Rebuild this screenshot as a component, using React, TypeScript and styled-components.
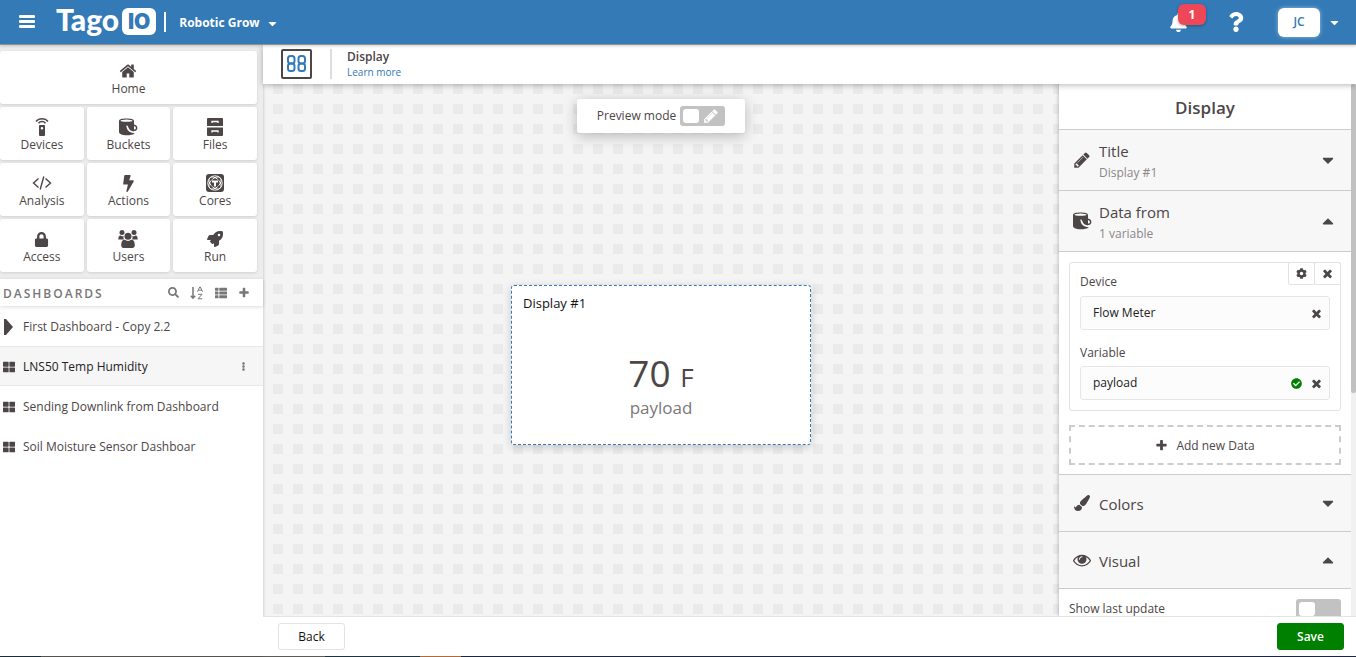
import React from "react";
import styled, { createGlobalStyle, css } from "styled-components";
import {
  FaBell,
  FaBolt,
  FaCaretDown,
  FaCaretUp,
  FaCheckCircle,
  FaCog,
  FaEllipsisV,
  FaLock,
  FaPaintBrush,
  FaQuestion,
  FaRocket,
  FaSearch,
  FaThLarge,
  FaThList,
} from "react-icons/fa";

const GlobalStyle = createGlobalStyle`
  *, *::before, *::after { box-sizing: border-box; }
  body {
    margin: 0;
    background: #fff;
    color: #4c4647;
    font-family: "Open Sans", "Noto Sans", sans-serif;
    font-size: 12px;
    line-height: 16px;
  }
  button, input { font: inherit; color: inherit; }
  button { margin: 0; padding: 0; border: 0; background: none; cursor: pointer; }
  a { color: inherit; text-decoration: none; }
  svg { display: block; flex: none; }
`;

/* ---------- icons ---------- */

interface GlyphProps {
  size: number;
}

const glyph = (d: string) =>
  function Glyph({ size }: GlyphProps) {
    return (
      <svg width={size} height={size} viewBox="0 0 1792 1792" fill="currentColor">
        <path d={d} />
      </svg>
    );
  };

const PencilIcon = glyph(
  "M491 1536l91-91-235-235-91 91v107h128v128h107zm523-928q0-22-22-22-10 0-17 7l-542 542q-7 7-7 17 0 22 22 22 10 0 17-7l542-542q7-7 7-17zm-54-192l416 416-832 832h-416v-416zm683 96q0 53-37 90l-166 166-416-416 166-165q36-38 90-38 53 0 91 38l235 234q37 39 37 91z"
);

const EyeIcon = glyph(
  "M1664 960q-152-236-381-353 61 104 61 225 0 185-131.500 316.500t-316.500 131.500-316.500-131.500-131.500-316.500q0-121 61-225-229 117-381 353 133 205 333.500 326.500t434.500 121.500 434.500-121.500 333.500-326.500zm-720-384q0-20-14-34t-34-14q-125 0-214.500 89.500t-89.500 214.500q0 20 14 34t34 14 34-14 14-34q0-86 61-147t147-61q20 0 34-14t14-34zm848 384q0 34-20 69-140 230-376.500 368.500t-499.500 138.500-499.500-139-376.500-368q-20-35-20-69t20-69q140-229 376.500-368t499.500-139 499.500 139 376.500 368q20 35 20 69z"
);

const CloseIcon = glyph(
  "M1490 1322q0 40-28 68l-136 136q-28 28-68 28t-68-28l-294-294-294 294q-28 28-68 28t-68-28l-136-136q-28-28-28-68t28-68l294-294-294-294q-28-28-28-68t28-68l136-136q28-28 68-28t68 28l294 294 294-294q28-28 68-28t68 28l136 136q28 28 28 68t-28 68l-294 294 294 294q28 28 28 68z"
);

const PlusIcon = glyph(
  "M1600 736v192q0 40-28 68t-68 28h-416v416q0 40-28 68t-68 28h-192q-40 0-68-28t-28-68v-416h-416q-40 0-68-28t-28-68v-192q0-40 28-68t68-28h416v-416q0-40 28-68t68-28h192q40 0 68 28t28 68v416h416q40 0 68 28t28 68z"
);

const HomeIcon = glyph(
  "M1472 992v480q0 26-19 45t-45 19h-384v-384h-256v384h-384q-26 0-45-19t-19-45v-480q0-1 .5-3t.5-3l575-474 575 474q1 2 1 6zm223-69l-62 74q-8 9-21 11h-3q-13 0-21-7l-692-577-692 577q-12 8-24 7-13-2-21-11l-62-74q-8-10-7-23.500t11-21.500l719-599q32-26 76-26t76 26l244 204v-195q0-14 9-23t23-9h192q14 0 23 9t9 23v408l219 182q10 8 11 21.500t-7 23.500z"
);

const MenuIcon = () => (
  <svg width="17" height="14" viewBox="0 0 17 14" fill="currentColor">
    <rect width="16" height="3" rx="1" />
    <rect y="5" width="16" height="3" rx="1" />
    <rect y="10" width="16" height="3" rx="1" />
  </svg>
);

const DeviceIcon = () => (
  <svg width="20" height="20" viewBox="0 0 20 20" fill="none" stroke="currentColor">
    <path d="M4 4.500C7 .9 13 .9 16 4.500" strokeWidth="1.400" />
    <path d="M6.500 6.200C8.300 4 11.700 4 13.500 6.200" strokeWidth="1.400" />
    <path
      fill="currentColor"
      stroke="none"
      fillRule="evenodd"
      d="M8 8h4a1 1 0 0 1 1 1v9a1 1 0 0 1-1 1H8a1 1 0 0 1-1-1V9a1 1 0 0 1 1-1zm2 2a1.300 1.300 0 1 0 0 2.600A1.300 1.300 0 0 0 10 10z"
    />
  </svg>
);

const BucketIcon = () => (
  <svg width="20" height="20" viewBox="0 0 20 20">
    <path
      fill="currentColor"
      d="M1 4C1 2.200 4 1.500 8.500 1.500S16 2.200 16 4v3.500c2.300.2 3.400 1.700 3.400 3.400 0 2-1.500 3.200-3.400 3.200v1.400l.4 1.300c-2.500 1.500-7.400 1.900-11.200 1.100C2.500 17.300 1 16.500 1 15z"
    />
    <ellipse cx="8.500" cy="3.700" rx="6" ry="1.100" fill="#fff" />
    <path d="M16 9.200c1.200 0 1.900.7 1.900 1.700s-.7 1.700-1.900 1.700z" fill="#fff" />
    <path d="M8.500 9c1 .2 1 1.200 1.200 2 .5 2 2.800 3.800 6.300 4.300" fill="none" stroke="#fff" strokeWidth="1.700" />
  </svg>
);

const FilesIcon = () => (
  <svg width="20" height="20" viewBox="0 0 20 20">
    <path fill="currentColor" d="M3 1h14a1 1 0 0 1 1 1v7H2V2a1 1 0 0 1 1-1zM2 10.500h16V18a1 1 0 0 1-1 1H3a1 1 0 0 1-1-1z" />
    <path d="M7 6V4.500h6V6M7 15.500V14h6v1.500" fill="none" stroke="#fff" strokeWidth="1.300" />
  </svg>
);

const CodeIcon = () => (
  <svg width="20" height="20" viewBox="0 0 20 20" fill="none" stroke="currentColor" strokeWidth="1.400">
    <path d="M6.500 5.500L1.500 10l5 4.500M13.500 5.500l5 4.500-5 4.500M11.800 3.500L8.200 16.500" />
  </svg>
);

const CoresIcon = () => (
  <svg width="20" height="20" viewBox="0 0 20 20">
    <rect x="1" y="1" width="18" height="18" rx="3" fill="currentColor" />
    <g fill="none" stroke="#fff" strokeWidth="0.900">
      <circle cx="10" cy="10" r="7.200" />
      <ellipse cx="10" cy="10" rx="7.400" ry="4.500" transform="rotate(45 10 10)" />
      <ellipse cx="10" cy="10" rx="7.400" ry="4.500" transform="rotate(-45 10 10)" />
    </g>
    <circle cx="10" cy="10" r="4" fill="currentColor" />
    <path d="M7 7.500h6v2h-2v4H9v-4H7z" fill="#fff" />
  </svg>
);

const UsersIcon = () => (
  <svg width="20" height="20" viewBox="0 0 20 20" fill="currentColor">
    <circle cx="4" cy="3.600" r="2.500" />
    <circle cx="16" cy="3.600" r="2.500" />
    <path d="M.3 10.500C.3 7.800 1 6.600 2.500 6.600c1.200.8 2.200.8 3.200.3C5.200 8.300 5.500 9.400 6 10.500z" />
    <path d="M19.700 10.500c0-2.700-.7-3.900-2.200-3.900-1.200.8-2.200.8-3.200.3.500 1.400.2 2.500-.3 3.600z" />
    <circle cx="10" cy="7.300" r="3.500" />
    <path d="M3.200 16.500c0-3.700 1.100-5.700 3.400-5.700 2.200 1.500 4.600 1.500 6.800 0 2.300 0 3.400 2 3.400 5.700 0 1.600-1 2.500-2.400 2.500H5.600c-1.400 0-2.400-.9-2.400-2.500z" />
  </svg>
);

const SortIcon = () => (
  <svg width="14" height="14" viewBox="0 0 14 14" fill="none" stroke="currentColor">
    <path d="M3 1v11M.8 9.800L3 12.200l2.200-2.400" strokeWidth="1.500" />
    <path d="M7.500 5.700L9.700 1h.6l2.200 4.700M8.300 4.200h3.400M8 8.300h4L8 12.800h4.200" strokeWidth="1" />
  </svg>
);

const DisplayIcon = () => (
  <svg width="31" height="30" viewBox="0 0 31 30" fill="none">
    <rect x="1" y="1" width="29" height="28" rx="1" stroke="#4c4647" strokeWidth="2" />
    <g stroke="#337ab7" strokeWidth="2">
      <rect x="7" y="7" width="6.500" height="7.500" rx="2.500" />
      <rect x="7" y="14.500" width="6.500" height="7.500" rx="2.500" />
      <rect x="17.500" y="7" width="6.500" height="7.500" rx="2.500" />
      <rect x="17.500" y="14.500" width="6.500" height="7.500" rx="2.500" />
    </g>
  </svg>
);

const PlayIcon = () => (
  <svg width="10" height="16" viewBox="0 0 10 16">
    <path d="M1 0h2l7 8-7 8H1z" fill="currentColor" />
  </svg>
);

/* ---------- page frame ---------- */

const Page = styled.div`
  display: flex;
  flex-direction: column;
  height: 100vh;
  min-height: 480px;
  overflow: hidden;
`;

const Body = styled.div`
  display: flex;
  flex: 1;
  min-height: 0;
`;

const BottomEdge = styled.div`
  height: 1px;
  background: linear-gradient(
    90deg,
    #1d3340 0 3%,
    #5d5a5a 3% 24%,
    #1d3340 24% 31%,
    #b06a3a 31% 34%,
    #1b2740 34%
  );
`;

/* ---------- header ---------- */

const Header = styled.header`
  position: relative;
  z-index: 3;
  display: flex;
  align-items: center;
  flex: none;
  height: 45px;
  padding: 0 15px 0 19px;
  border-bottom: 1px solid #8f9295;
  background: #337ab7;
  box-shadow: 0 1px 3px rgba(0, 0, 0, 0.2);
  color: #fff;
`;

const Logo = styled.a`
  display: flex;
  align-items: flex-start;
  gap: 3px;
  height: 28px;
  margin: 0 8px 0 20px;
  font-family: Lato, sans-serif;
  font-size: 30px;
  font-weight: 900;
  line-height: 22px;
`;

const LogoBox = styled.span`
  width: 34px;
  height: 27px;
  border-radius: 6px;
  background: #fff;
  color: #337ab7;
  font-family: Inter, sans-serif;
  font-size: 21px;
  font-weight: 900;
  line-height: 27px;
  text-align: center;
`;

const HeaderRule = styled.span`
  width: 2px;
  height: 20px;
  background: #fff;
`;

const ProfileButton = styled.button`
  display: flex;
  align-items: center;
  gap: 6px;
  margin-left: 13px;
  padding-top: 2px;
  font-weight: 700;
`;

const HeaderActions = styled.div`
  display: flex;
  align-items: center;
  margin-left: auto;
`;

const BellButton = styled.button`
  position: relative;
  margin-right: 38px;
`;

const Badge = styled.span`
  position: absolute;
  top: -9px;
  left: 9px;
  width: 28px;
  height: 21px;
  border-radius: 6px;
  background: #ed4758;
  box-shadow: 0 1px 3px rgba(0, 0, 0, 0.3);
  font-weight: 700;
  line-height: 22px;
`;

const Avatar = styled.button`
  width: 42px;
  height: 29px;
  margin: 0 8px 0 32px;
  border-radius: 6px;
  background: #fff;
  box-shadow: 0 0 4px rgba(255, 255, 255, 0.5);
  color: #337ab7;
  font-weight: 600;
`;

/* ---------- sidebar ---------- */

const Sidebar = styled.aside`
  position: relative;
  z-index: 1;
  display: flex;
  flex-direction: column;
  flex: none;
  width: 263px;
  background: #fff;
  box-shadow: 0 0 3px rgba(0, 0, 0, 0.25);
`;

const Tiles = styled.nav`
  display: grid;
  grid-template-columns: repeat(3, 1fr);
  gap: 3px;
  padding: 6px 6px 7px 0;
  background: #ededed;
`;

const Tile = styled.a<{ $wide?: boolean }>`
  display: flex;
  flex-direction: column;
  align-items: center;
  justify-content: center;
  height: 53px;
  padding-top: 3px;
  border-radius: 3px;
  background: #fff;
  box-shadow: 0 1px 3px rgba(0, 0, 0, 0.12);
  ${(p) => p.$wide && css`grid-column: 1 / -1;`}
`;

const TileIcon = styled.span`
  display: flex;
  align-items: center;
  justify-content: center;
  height: 20px;
`;

const ListHead = styled.div`
  position: relative;
  display: flex;
  align-items: center;
  height: 27px;
  padding: 0 13px 0 3px;
  background: #fff;
  box-shadow: 0 1px 4px rgba(0, 0, 0, 0.15);
  color: #777;
`;

const ListTitle = styled.h2`
  flex: 1;
  margin: 0;
  padding-top: 2px;
  font-size: 12px;
  font-weight: 600;
  letter-spacing: 2px;
`;

const ListTools = styled.div`
  display: flex;
  align-items: center;
  gap: 11px;
`;

const DashList = styled.ul`
  margin: 0;
  padding: 0;
  list-style: none;
`;

const DashItem = styled.li<{ $active?: boolean }>`
  display: flex;
  align-items: center;
  height: 40px;
  padding: 0 15px 0 3px;
  border: solid transparent;
  border-width: 1px 0;
  color: #777;
  ${(p) =>
    p.$active &&
    css`
      border-color: #e8e8e8;
      background: #f6f6f6;
    `}
`;

const DashLink = styled.a<{ $active?: boolean }>`
  display: flex;
  align-items: center;
  flex: 1;
  padding-top: 1px;
  line-height: 20px;
  color: ${(p) => (p.$active ? "#222" : "#4c4647")};
`;

const DashIcon = styled.span`
  width: 20px;
  color: #4c4647;
`;

/* ---------- editor ---------- */

const Main = styled.main`
  display: flex;
  flex: 1;
  flex-direction: column;
  min-width: 0;
`;

const TitleBar = styled.div`
  position: relative;
  z-index: 2;
  display: flex;
  align-items: center;
  flex: none;
  height: 39px;
  padding: 0 0 1px 18px;
  background: #fff;
  box-shadow: 0 1px 6px rgba(0, 0, 0, 0.3);
`;

const TitleText = styled.div`
  margin-left: 18px;
  padding-left: 15px;
  border-left: 2px solid #ddd;
`;

const WidgetType = styled.h1`
  margin: 0;
  font-size: 12px;
  font-weight: 600;
  line-height: 16px;
`;

const LearnMore = styled.a`
  display: block;
  color: #337ab7;
  font-size: 10px;
  line-height: 14px;
`;

const Work = styled.div`
  display: flex;
  flex: 1;
  min-height: 0;
`;

const Canvas = styled.section`
  display: flex;
  flex: 1;
  flex-direction: column;
  align-items: center;
  padding: 15px 0 19px;
  background-color: #f4f4f4;
  background-image: conic-gradient(#eaeaea 25%, transparent 0);
  background-size: 20px 20px;
`;

const PreviewBox = styled.label`
  display: flex;
  align-items: center;
  gap: 4px;
  height: 34px;
  padding: 0 20px;
  border-radius: 3px;
  background: #fff;
  box-shadow: 0 3px 14px rgba(0, 0, 0, 0.25);
`;

const Switch = styled.span`
  display: flex;
  align-items: center;
  width: 45px;
  height: 20px;
  padding-right: 6px;
  border-radius: 3px;
  background: #c2c2c2;
  color: #fff;
`;

const SwitchInput = styled.input`
  flex: none;
  width: 16px;
  height: 14px;
  margin: 0 auto 0 3px;
  border-radius: 3px;
  background: #fff;
  appearance: none;
  cursor: pointer;
`;

const Stage = styled.div`
  display: flex;
  align-items: center;
  flex: 1;
`;

const Widget = styled.article`
  display: flex;
  flex-direction: column;
  width: 300px;
  height: 160px;
  padding: 7px 11px;
  border: 1px dashed #337ab7;
  border-radius: 3px;
  background: #fff;
  box-shadow: 0 2px 8px rgba(0, 0, 0, 0.18);
`;

const WidgetTitle = styled.h2`
  margin: 0;
  color: #111;
  font-size: 13px;
  font-weight: 400;
  line-height: 20px;
`;

const Reading = styled.div`
  display: flex;
  flex: 1;
  flex-direction: column;
  align-items: center;
  justify-content: center;
  padding-top: 23px;
`;

const Value = styled.div`
  font-size: 37px;
  line-height: 38px;
`;

const Unit = styled.span`
  font-size: 26px;
`;

const ValueName = styled.div`
  color: #7b7778;
  font-size: 17px;
  line-height: 24px;
`;

/* ---------- settings panel ---------- */

const Panel = styled.aside`
  flex: none;
  width: 292px;
  overflow: hidden;
  background: #fff;
  box-shadow: 0 0 4px rgba(0, 0, 0, 0.3);
`;

const ScrollTrack = styled.div`
  flex: none;
  width: 5px;
  background: #f1f1f1;
`;

const ScrollThumb = styled.div`
  height: 58%;
  border-radius: 2px;
  background: #c1c1c1;
`;

const PanelTitle = styled.h2`
  margin: 0;
  padding-top: 2px;
  border-bottom: 1px solid #ccc;
  font-size: 17px;
  font-weight: 600;
  line-height: 43px;
  text-align: center;
`;

const SectionHead = styled.button<{ $tall?: boolean }>`
  display: flex;
  align-items: center;
  width: 100%;
  height: ${(p) => (p.$tall ? 61 : 57)}px;
  padding: 0 14px 0 13px;
  border-bottom: 1px solid #ccc;
  background: #f7f7f7;
  text-align: left;
`;

const SectionIcon = styled.span`
  display: flex;
  align-items: center;
  justify-content: center;
  width: 20px;
  margin-right: 7px;
`;

const SectionText = styled.span<{ $tall?: boolean }>`
  display: flex;
  flex: 1;
  flex-direction: column;
  padding-top: ${(p) => (p.$tall ? 3 : 1)}px;
  font-size: 15px;
  line-height: 22px;
`;

const SectionNote = styled.small`
  color: #8b8788;
  font-size: 12px;
  line-height: 21px;
`;

const SectionBody = styled.div`
  padding: 10px 10px 9px;
  border-bottom: 1px solid #ccc;
`;

const DataCard = styled.div`
  position: relative;
  padding: 10px;
  border: 1px solid #e3e3e3;
  border-radius: 3px;
`;

const CardTools = styled.div`
  position: absolute;
  top: -1px;
  right: -1px;
  display: flex;
`;

const CardTool = styled.button`
  display: flex;
  align-items: center;
  justify-content: center;
  width: 27px;
  height: 23px;
  margin-left: -1px;
  border: 1px solid #e3e3e3;
  border-radius: 2px;
`;

const FieldLabel = styled.label`
  display: block;
  margin: 1px 0 6px;
`;

const Field = styled.div`
  display: flex;
  align-items: center;
  gap: 8px;
  height: 34px;
  padding: 0 6px 0 12px;
  border: 1px solid #e6e6e6;
  border-radius: 3px;
  background: #fcfcfc;

  & + label { margin: 15px 0 5px; }
`;

const FieldInput = styled.input`
  flex: 1;
  min-width: 0;
  padding: 0;
  border: 0;
  outline: 0;
  background: none;
  color: #222;
`;

const AddButton = styled.button`
  display: flex;
  align-items: center;
  justify-content: center;
  gap: 8px;
  width: 100%;
  height: 40px;
  margin-top: 14px;
  padding-top: 1px;
  border: 2px dashed #ccc;
`;

const OptionRow = styled.label`
  display: flex;
  align-items: center;
  justify-content: space-between;
  padding: 10px;
`;

/* ---------- footer ---------- */

const Footer = styled.footer`
  position: relative;
  z-index: 2;
  display: flex;
  align-items: center;
  justify-content: space-between;
  flex: none;
  height: 40px;
  padding: 0 12px 0 15px;
  border-top: 1px solid #e3e3e3;
  background: #fff;
`;

const FooterButton = styled.button<{ $primary?: boolean }>`
  width: 67px;
  height: 27px;
  border: 1px solid ${(p) => (p.$primary ? "#008000" : "#e3e3e3")};
  border-radius: 3px;
  background: ${(p) => (p.$primary ? "#008000" : "#fff")};
  color: ${(p) => (p.$primary ? "#fff" : "#111")};
  font-weight: ${(p) => (p.$primary ? 600 : 400)};
`;

const tiles = [
  { label: "Home", icon: <HomeIcon size={18} />, wide: true },
  { label: "Devices", icon: <DeviceIcon /> },
  { label: "Buckets", icon: <BucketIcon /> },
  { label: "Files", icon: <FilesIcon /> },
  { label: "Analysis", icon: <CodeIcon /> },
  { label: "Actions", icon: <FaBolt size={17} /> },
  { label: "Cores", icon: <CoresIcon /> },
  { label: "Access", icon: <FaLock size={15} /> },
  { label: "Users", icon: <UsersIcon /> },
  { label: "Run", icon: <FaRocket size={16} /> },
];

const dashboards = [
  { name: "First Dashboard - Copy 2.2", folder: true },
  { name: "LNS50 Temp Humidity", active: true },
  { name: "Sending Downlink from Dashboard" },
  { name: "Soil Moisture Sensor Dashboar" },
];

interface SectionProps {
  icon: React.ReactNode;
  title: string;
  note?: string;
  open?: boolean;
}

const Section = ({ icon, title, note, open = false }: SectionProps) => (
  <SectionHead type="button" $tall={Boolean(note)} aria-expanded={open}>
    <SectionIcon>{icon}</SectionIcon>
    <SectionText $tall={Boolean(note)}>
      {title}
      {note && <SectionNote>{note}</SectionNote>}
    </SectionText>
    {open ? <FaCaretUp size={18} /> : <FaCaretDown size={18} />}
  </SectionHead>
);

export default function App() {
  return (
    <Page>
      <GlobalStyle />
      <Header>
        <button type="button" aria-label="Toggle menu">
          <MenuIcon />
        </button>
        <Logo href="#">
          <span>Tago</span>
          <LogoBox>IO</LogoBox>
        </Logo>
        <HeaderRule />
        <ProfileButton type="button">
          Robotic Grow
          <FaCaretDown size={13} />
        </ProfileButton>
        <HeaderActions>
          <BellButton type="button" aria-label="Notifications">
            <FaBell size={19} />
            <Badge>1</Badge>
          </BellButton>
          <button type="button" aria-label="Help">
            <FaQuestion size={20} />
          </button>
          <Avatar type="button">JC</Avatar>
          <button type="button" aria-label="Account menu">
            <FaCaretDown size={13} />
          </button>
        </HeaderActions>
      </Header>

      <Body>
        <Sidebar>
          <Tiles>
            {tiles.map((t) => (
              <Tile key={t.label} href="#" $wide={t.wide}>
                <TileIcon>{t.icon}</TileIcon>
                {t.label}
              </Tile>
            ))}
          </Tiles>
          <ListHead>
            <ListTitle>DASHBOARDS</ListTitle>
            <ListTools>
              <button type="button" aria-label="Search dashboards"><FaSearch size={11} /></button>
              <button type="button" aria-label="Sort dashboards"><SortIcon /></button>
              <button type="button" aria-label="List view"><FaThList size={12} /></button>
              <button type="button" aria-label="Add dashboard"><PlusIcon size={12} /></button>
            </ListTools>
          </ListHead>
          <DashList>
            {dashboards.map((d) => (
              <DashItem key={d.name} $active={d.active}>
                <DashLink href="#" $active={d.active}>
                  <DashIcon>{d.folder ? <PlayIcon /> : <FaThLarge size={12} />}</DashIcon>
                  {d.name}
                </DashLink>
                {d.active && (
                  <button type="button" aria-label="Dashboard options"><FaEllipsisV size={9} /></button>
                )}
              </DashItem>
            ))}
          </DashList>
        </Sidebar>

        <Main>
          <TitleBar>
            <DisplayIcon />
            <TitleText>
              <WidgetType>Display</WidgetType>
              <LearnMore href="#">Learn more</LearnMore>
            </TitleText>
          </TitleBar>

          <Work>
            <Canvas>
              <PreviewBox>
                Preview mode
                <Switch>
                  <SwitchInput type="checkbox" />
                  <PencilIcon size={16} />
                </Switch>
              </PreviewBox>
              <Stage>
                <Widget>
                  <WidgetTitle>Display #1</WidgetTitle>
                  <Reading>
                    <Value>70 <Unit>F</Unit></Value>
                    <ValueName>payload</ValueName>
                  </Reading>
                </Widget>
              </Stage>
            </Canvas>

            <Panel>
              <PanelTitle>Display</PanelTitle>
              <Section icon={<PencilIcon size={18} />} title="Title" note="Display #1" />
              <Section icon={<BucketIcon />} title="Data from" note="1 variable" open />
              <SectionBody>
                <DataCard>
                  <CardTools>
                    <CardTool type="button" aria-label="Data settings"><FaCog size={11} /></CardTool>
                    <CardTool type="button" aria-label="Remove data"><CloseIcon size={13} /></CardTool>
                  </CardTools>
                  <FieldLabel htmlFor="device">Device</FieldLabel>
                  <Field>
                    <FieldInput id="device" defaultValue="Flow Meter" />
                    <button type="button" aria-label="Clear device"><CloseIcon size={13} /></button>
                  </Field>
                  <FieldLabel htmlFor="variable">Variable</FieldLabel>
                  <Field>
                    <FieldInput id="variable" defaultValue="payload" />
                    <FaCheckCircle size={11} color="#008000" />
                    <button type="button" aria-label="Clear variable"><CloseIcon size={13} /></button>
                  </Field>
                </DataCard>
                <AddButton type="button">
                  <PlusIcon size={13} />
                  Add new Data
                </AddButton>
              </SectionBody>
              <Section icon={<FaPaintBrush size={16} />} title="Colors" />
              <Section icon={<EyeIcon size={18} />} title="Visual" open />
              <OptionRow>
                Show last update
                <Switch>
                  <SwitchInput type="checkbox" />
                </Switch>
              </OptionRow>
            </Panel>
            <ScrollTrack>
              <ScrollThumb />
            </ScrollTrack>
          </Work>

          <Footer>
            <FooterButton type="button">Back</FooterButton>
            <FooterButton type="button" $primary>Save</FooterButton>
          </Footer>
        </Main>
      </Body>
      <BottomEdge />
    </Page>
  );
}
